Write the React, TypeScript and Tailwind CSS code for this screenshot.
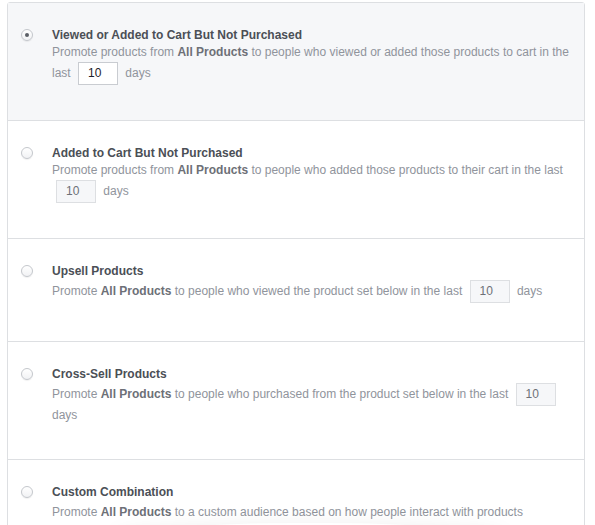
import React from "react";

function Radio({ checked }: { checked?: boolean }) {
  return (
    <span className="mt-[2px] flex h-3 w-3 shrink-0 items-center justify-center rounded-full border border-[#c4c7cc] bg-gradient-to-b from-white to-[#f1f2f4] shadow-[0_1px_1px_rgba(0,0,0,0.06)]">
      {checked && <span className="h-[4px] w-[4px] rounded-full bg-[#5b5f66]" />}
    </span>
  );
}

function DaysInput({ active }: { active?: boolean }) {
  return (
    <span
      className={
        active
          ? "mx-1 inline-block h-[23px] w-10 border border-[#c9ccd1] bg-white pl-[9px] align-middle text-[12px] leading-[21px] text-[#1d2129]"
          : "mx-1 inline-block h-[23px] w-10 border border-[#dddfe2] bg-[#f6f7f9] pl-[9px] align-middle text-[12px] leading-[21px] text-[#6d7077]"
      }
    >
      10
    </span>
  );
}

const B = ({ children }: { children: React.ReactNode }) => (
  <span className="font-bold text-[#6d7077]">{children}</span>
);

function Row({
  title,
  checked,
  children,
  last,
  pad = "pb-[35px]",
  descGap = "",
}: {
  title: string;
  checked?: boolean;
  children: React.ReactNode;
  last?: boolean;
  pad?: string;
  descGap?: string;
}) {
  return (
    <div
      className={
        (checked ? "bg-[#f6f7f9] " : "bg-white ") +
        (last ? "" : "border-b border-[#dddfe2] ") +
        pad +
        " flex pl-[13px] pr-[14px] pt-6"
      }
    >
      <Radio checked={checked} />
      <div className="ml-[19px] min-w-0 flex-1">
        <div className="text-[12px] font-bold leading-4 text-[#4b4f56]">{title}</div>
        <div className={"text-[12px] leading-[19px] text-[#90949c] " + descGap}>{children}</div>
      </div>
    </div>
  );
}

export default function App() {
  return (
    <div
      className="h-[525px] w-[595px] overflow-hidden bg-white pl-[7px] pt-[2px]"
      style={{ fontFamily: '"Liberation Sans", Arial, Helvetica, sans-serif' }}
    >
      <div className="w-[578px] rounded-t-[3px] border border-[#dddfe2]">
        <Row title="Viewed or Added to Cart But Not Purchased" checked>
          Promote products from <B>All Products</B> to people who viewed or added those products to cart in the last{" "}
          <DaysInput active /> days
        </Row>
        <Row title="Added to Cart But Not Purchased">
          Promote products from <B>All Products</B> to people who added those products to their cart in the last{" "}
          <DaysInput /> days
        </Row>
        <Row title="Upsell Products" pad="pb-[38px]" descGap="mt-[1px]">
          Promote <B>All Products</B> to people who viewed the product set below in the last <DaysInput /> days
        </Row>
        <Row title="Cross-Sell Products" descGap="mt-[1px]" pad="pb-[34px]">
          Promote <B>All Products</B> to people who purchased from the product set below in the last <DaysInput /> days
        </Row>
        <Row title="Custom Combination" last descGap="mt-[3px]">
          Promote <B>All Products</B> to a custom audience based on how people interact with products
        </Row>
      </div>
      <div className="pointer-events-none fixed left-[110px] top-[523px] h-[30px] w-[400px] rounded-[50%] bg-white shadow-[0_-2px_18px_rgba(0,0,0,0.05)]" />
    </div>
  );
}
